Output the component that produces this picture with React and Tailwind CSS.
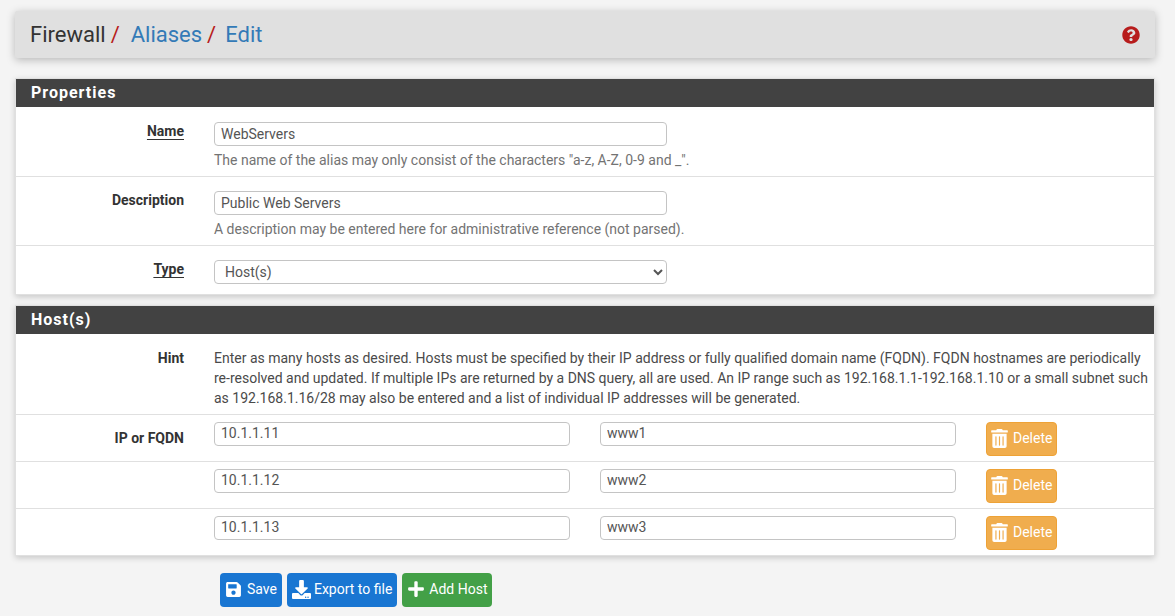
import React from "react";
import { FaSave, FaDownload, FaPlus, FaTrashAlt, FaQuestionCircle } from "react-icons/fa";

const inputCls = "h-[24px] border border-[#c4c4c4] rounded-[4px] bg-white px-[6px] text-[14px] leading-[20px] text-[#555] outline-none";

function Label({ children, u, cls = "" }) {
  return (
    <div className={"w-[168px] shrink-0 text-right text-[14px] leading-[20px] font-bold text-[#333] " + cls}>
      <span className={u ? "underline underline-offset-[3px]" : ""}>{children}</span>
    </div>
  );
}

function Panel({ title, children, headCls }) {
  return (
    <section className="border border-[#e0e0e0] bg-white shadow-[0_2px_6px_rgba(0,0,0,0.18)]">
      <h2 className={"h-[28px] bg-[#424242] pl-[15px] text-[16px] font-bold tracking-[1px] text-white " + headCls}>{title}</h2>
      {children}
    </section>
  );
}

function Row({ label, u, children, cls, labelCls }) {
  return (
    <div className={"flex border-b border-[#e0e0e0] last:border-b-0 " + cls}>
      <Label u={u} cls={labelCls}>{label}</Label>
      <div className="ml-[30px] flex-1">{children}</div>
    </div>
  );
}

function HostRow({ label, ip, name }) {
  return (
    <div className="flex h-[47px] border-t border-[#e0e0e0] pt-[7px]">
      <div className="w-[168px] shrink-0 pt-[6px] text-right text-[14px] leading-[20px] font-bold text-[#333]">{label}</div>
      <div className="ml-[30px] flex gap-[30px]">
        <input readOnly value={ip} className={inputCls + " w-[356px] pb-[2px]"} />
        <input readOnly value={name} className={inputCls + " w-[356px] pb-[2px]"} />
        <button className="flex h-[34px] w-[71px] items-center gap-[5px] rounded-[4px] border border-[#eea236] bg-[#f0ad4e] pb-[2px] pl-[4px] text-[14px] text-white">
          <FaTrashAlt className="h-[19px] w-[17px]" />
          Delete
        </button>
      </div>
    </div>
  );
}

export default function App() {
  return (
    <div className="min-h-[616px] bg-[#f4f4f4] pt-[11px] pr-[20px] pb-[9px] pl-[15px] font-['Roboto',sans-serif]">
      <header className="flex h-[47px] items-center justify-between rounded-[2px] bg-[#e0e0e0] pr-[15px] pl-[15px] shadow-[0_2px_8px_rgba(0,0,0,0.25)]">
        <h1 className="text-[22px] leading-[47px] font-normal text-[#333]">
          Firewall<span className="mr-[6px] ml-[5px] text-[#b71c1c]">/</span>
          <a className="ml-[5px] text-[#337ab7]">Aliases</a>
          <span className="mr-[5px] ml-[5px] text-[#b71c1c]">/</span>
          <a className="ml-[4px] text-[#337ab7]">Edit</a>
        </h1>
        <FaQuestionCircle className="h-[18px] w-[18px] text-[#b71c1c]" />
      </header>

      <div className="mt-[20px]">
        <Panel title="Properties" headCls="leading-[27px]">
          <Row label="Name" u cls="h-[70px] pt-[14px]">
            <input readOnly value="WebServers" className={inputCls + " mt-[1px] block w-[453px]"} />
            <p className="mt-[4px] text-[14px] leading-[20px] text-[#737373]">The name of the alias may only consist of the characters "a-z, A-Z, 0-9 and _".</p>
          </Row>
          <Row label="Description" cls="h-[69px] pt-[14px]" labelCls="-mt-[1px]">
            <input readOnly value="Public Web Servers" className={inputCls + " block w-[453px]"} />
            <p className="mt-[4px] text-[14px] leading-[20px] text-[#737373]">A description may be entered here for administrative reference (not parsed).</p>
          </Row>
          <Row label="Type" u cls="h-[48px] pt-[14px]" labelCls="-mt-[1px]">
            <select defaultValue="Host(s)" className={inputCls + " block w-[453px]"}>
              <option>Host(s)</option>
            </select>
          </Row>
        </Panel>
      </div>

      <div className="mt-[10px]">
        <Panel title="Host(s)" headCls="leading-[28px]">
          <div className="flex h-[80px] pt-[14px]">
            <Label>Hint</Label>
            <p className="ml-[30px] w-[940px] text-[14px] leading-[20px] text-[#4a4a4a]">
              Enter as many hosts as desired. Hosts must be specified by their IP address or fully qualified domain name (FQDN). FQDN hostnames are periodically re-resolved and updated. If multiple IPs are returned by a DNS query, all are used. An IP range such as 192.168.1.1-192.168.1.10 or a small subnet such as 192.168.1.16/28 may also be entered and a list of individual IP addresses will be generated.
            </p>
          </div>
          <HostRow label="IP or FQDN" ip="10.1.1.11" name="www1" />
          <HostRow label="" ip="10.1.1.12" name="www2" />
          <HostRow label="" ip="10.1.1.13" name="www3" />
        </Panel>
      </div>

      <div className="mt-[17px] ml-[205px] flex gap-[5px]">
        <button className="flex h-[34px] items-center gap-[5px] rounded-[4px] bg-[#1976d2] px-[5px] pb-[2px] text-[14px] text-white"><FaSave className="h-[17px] w-[17px]" />Save</button>
        <button className="flex h-[34px] items-center gap-[3px] rounded-[4px] bg-[#1976d2] px-[5px] pb-[2px] text-[14px] text-white"><FaDownload className="h-[19px] w-[19px]" />Export to file</button>
        <button className="flex h-[34px] w-[90px] items-center gap-[4px] whitespace-nowrap rounded-[4px] bg-[#43a047] pb-[2px] pl-[5px] text-[14px] text-white"><FaPlus className="h-[18px] w-[18px]" />Add Host</button>
      </div>
    </div>
  );
}
